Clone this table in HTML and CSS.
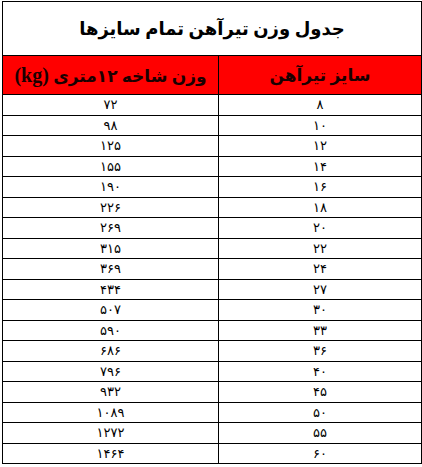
FILE: index.html
```html
<!DOCTYPE html>
<html lang="fa" dir="rtl">
<head>
<meta charset="utf-8">
<link rel="stylesheet" href="styles.css">
</head>
<body>
<table class="sheet">
  <colgroup><col class="c-size"><col class="c-weight"></colgroup>
  <tr class="title-row"><td colspan="2">جدول وزن تیرآهن تمام سایزها</td></tr>
  <tr class="head-row"><td>سایز تیرآهن</td><td class="wide">وزن شاخه ۱۲متری <span class="unit">(kg)</span></td></tr>
  <tr class="r"><td>۸</td><td>۷۲</td></tr>
  <tr class="r"><td>۱۰</td><td>۹۸</td></tr>
  <tr class="r"><td>۱۲</td><td>۱۲۵</td></tr>
  <tr class="r"><td>۱۴</td><td>۱۵۵</td></tr>
  <tr class="r"><td>۱۶</td><td>۱۹۰</td></tr>
  <tr class="r"><td>۱۸</td><td>۲۲۶</td></tr>
  <tr class="r"><td>۲۰</td><td>۲۶۹</td></tr>
  <tr class="r"><td>۲۲</td><td>۳۱۵</td></tr>
  <tr class="r"><td>۲۴</td><td>۳۶۹</td></tr>
  <tr class="r"><td>۲۷</td><td>۴۳۴</td></tr>
  <tr class="r"><td>۳۰</td><td>۵۰۷</td></tr>
  <tr class="r"><td>۳۳</td><td>۵۹۰</td></tr>
  <tr class="r"><td>۳۶</td><td>۶۸۶</td></tr>
  <tr class="r"><td>۴۰</td><td>۷۹۶</td></tr>
  <tr class="r"><td>۴۵</td><td>۹۳۲</td></tr>
  <tr class="r"><td>۵۰</td><td>۱۰۸۹</td></tr>
  <tr class="r"><td>۵۵</td><td>۱۲۷۲</td></tr>
  <tr class="r"><td>۶۰</td><td>۱۴۶۴</td></tr>
</table>
</body>
</html>
```
FILE: styles.css
```css
html, body {
  margin: 0;
  padding: 0;
  background: #ffffff;
}
body {
  padding: 1px 0 0 1px;
}
.sheet {
  border-collapse: collapse;
  table-layout: fixed;
  width: 419px;
  font-family: "Liberation Serif", "DejaVu Sans", serif;
  color: #000;
}
.c-size { width: 203px; }
.c-weight { width: 216px; }
.sheet td {
  border: 1px solid #000;
  text-align: center;
  padding: 0;
  overflow: hidden;
  white-space: nowrap;
}
.title-row td {
  height: 53px;
  font-size: 18px;
  font-weight: bold;
}
.head-row td {
  height: 38px;
  background: #ff0000;
  font-size: 17px;
  font-weight: bold;
  color: #1a0000;
}
.head-row td.wide {
  font-size: 17px;
}
.unit {
  font-size: 20px;
}
.r td {
  height: 19.5px;
  font-size: 13px;
  font-weight: normal;
  line-height: 1;
}
```
